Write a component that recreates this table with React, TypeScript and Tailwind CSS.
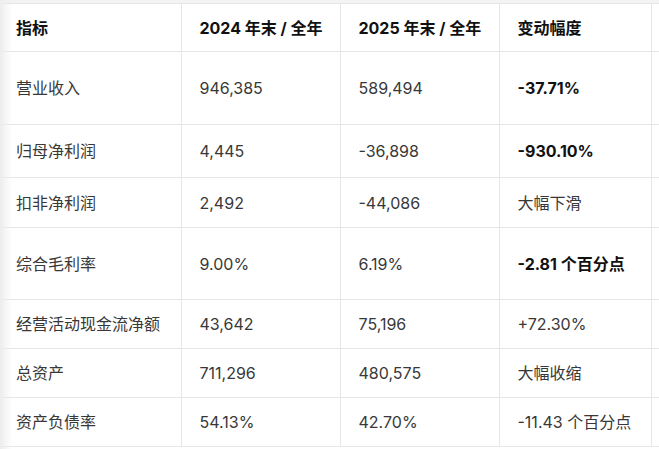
import React from 'react';

interface Row {
  label: string;
  y2024: string;
  y2025: string;
  change: string;
  bold?: boolean;
  h: string;
}

const rows: Row[] = [
  { label: '营业收入', y2024: '946,385', y2025: '589,494', change: '-37.71%', bold: true, h: 'h-[73px]' },
  { label: '归母净利润', y2024: '4,445', y2025: '-36,898', change: '-930.10%', bold: true, h: 'h-[53px]' },
  { label: '扣非净利润', y2024: '2,492', y2025: '-44,086', change: '大幅下滑', h: 'h-[50px]' },
  { label: '综合毛利率', y2024: '9.00%', y2025: '6.19%', change: '-2.81 个百分点', bold: true, h: 'h-[72px]' },
  { label: '经营活动现金流净额', y2024: '43,642', y2025: '75,196', change: '+72.30%', h: 'h-[49px]' },
  { label: '总资产', y2024: '711,296', y2025: '480,575', change: '大幅收缩', h: 'h-[49px]' },
  { label: '资产负债率', y2024: '54.13%', y2025: '42.70%', change: '-11.43 个百分点', h: 'h-[49px]' },
];

const cell = 'border-b border-r border-[#e6e6e6] pl-[18px] pr-2 align-middle whitespace-nowrap';
const first = 'border-b border-r border-[#e6e6e6] pl-[16px] pr-2 align-middle whitespace-nowrap';

export default function App() {
  return (
    <div
      className="relative w-[659px] h-[449px] overflow-hidden bg-white pt-[3px]"
      style={{ fontFamily: 'Inter, "Noto Sans CJK SC", sans-serif' }}
    >
      <div className="absolute left-0 top-0 h-[3px] w-full bg-[#f3f3f4]" />
      <table className="border-collapse table-fixed w-[760px] text-[16px] border-t border-[#e6e6e6]">
        <colgroup>
          <col className="w-[181px]" />
          <col className="w-[159px]" />
          <col className="w-[159px]" />
          <col className="w-[152px]" />
          <col className="w-[109px]" />
        </colgroup>
        <thead>
          <tr className="h-[48px] text-[#111] font-semibold text-left">
            <th className={first}>指标</th>
            <th className={cell}>2024 年末 / 全年</th>
            <th className={cell}>2025 年末 / 全年</th>
            <th className={cell}>变动幅度</th>
            <th className={cell}></th>
          </tr>
        </thead>
        <tbody className="text-[#383838]">
          {rows.map((r) => (
            <tr key={r.label} className={r.h}>
              <td className={first}>{r.label}</td>
              <td className={cell}>{r.y2024}</td>
              <td className={cell}>{r.y2025}</td>
              <td className={`${cell} ${r.bold ? 'font-bold text-[#111]' : ''}`}>{r.change}</td>
              <td className={cell}></td>
            </tr>
          ))}
        </tbody>
      </table>
      <div className="pointer-events-none absolute left-0 top-0 h-full w-[12px] bg-gradient-to-r from-[#ededed] to-transparent" />
    </div>
  );
}
